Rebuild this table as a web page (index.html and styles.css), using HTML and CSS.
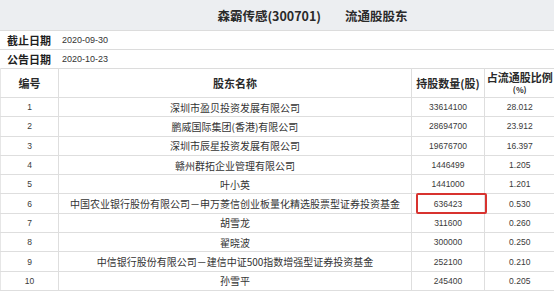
FILE: index.html
```html
<!DOCTYPE html>
<html lang="zh-CN">
<head>
<meta charset="utf-8">
<title>森霸传感(300701) 流通股股东</title>
<link rel="stylesheet" href="styles.css">
</head>
<body>
<div class="page">
  <div class="title">
    <span class="title-stock">森霸传感(300701)</span>
    <span class="title-kind">流通股股东</span>
  </div>
  <div class="info-row">
    <span class="info-label">截止日期</span>
    <span class="info-value">2020-09-30</span>
  </div>
  <div class="info-row">
    <span class="info-label">公告日期</span>
    <span class="info-value">2020-10-23</span>
  </div>
  <table class="holders">
    <colgroup>
      <col class="c-no">
      <col class="c-name">
      <col class="c-qty">
      <col class="c-pct">
    </colgroup>
    <thead>
      <tr>
        <th>编号</th>
        <th>股东名称</th>
        <th>持股数量(股)</th>
        <th class="th-pct">占流通股比例<br><span class="pct-unit">(%)</span></th>
      </tr>
    </thead>
    <tbody>
      <tr><td class="num">1</td><td class="name">深圳市盈贝投资发展有限公司</td><td class="num">33614100</td><td class="num">28.012</td></tr>
      <tr><td class="num">2</td><td class="name">鹏威国际集团(香港)有限公司</td><td class="num">28694700</td><td class="num">23.912</td></tr>
      <tr><td class="num">3</td><td class="name">深圳市辰星投资发展有限公司</td><td class="num">19676700</td><td class="num">16.397</td></tr>
      <tr><td class="num">4</td><td class="name">赣州群拓企业管理有限公司</td><td class="num">1446499</td><td class="num">1.205</td></tr>
      <tr><td class="num">5</td><td class="name">叶小英</td><td class="num">1441000</td><td class="num">1.201</td></tr>
      <tr><td class="num">6</td><td class="name">中国农业银行股份有限公司－申万菱信创业板量化精选股票型证券投资基金</td><td class="num highlight">636423</td><td class="num">0.530</td></tr>
      <tr><td class="num">7</td><td class="name">胡雪龙</td><td class="num">311600</td><td class="num">0.260</td></tr>
      <tr><td class="num">8</td><td class="name">翟晓波</td><td class="num">300000</td><td class="num">0.250</td></tr>
      <tr><td class="num">9</td><td class="name">中信银行股份有限公司－建信中证500指数增强型证券投资基金</td><td class="num">252100</td><td class="num">0.210</td></tr>
      <tr><td class="num">10</td><td class="name">孙雪平</td><td class="num">245400</td><td class="num">0.205</td></tr>
    </tbody>
  </table>
</div>
</body>
</html>
```

FILE: styles.css
```css
html, body {
  margin: 0;
  padding: 0;
  background: #ffffff;
}

body {
  font-family: "Noto Sans CJK SC", "Noto Sans", sans-serif;
  color: #2b2b2b;
}

.page {
  width: 554px;
  overflow: hidden;
}

.title {
  height: 30px;
  background: #eceef1;
  display: flex;
  align-items: center;
  justify-content: center;
  padding-left: 71px;
  box-sizing: border-box;
  font-size: 12.5px;
  font-weight: bold;
  color: #2a2a2a;
}

.title-kind {
  margin-left: 24px;
}

.info-row {
  height: 19px;
  box-sizing: border-box;
  border-top: 1px solid #dcdcdc;
  display: flex;
  align-items: center;
}

.info-label {
  width: 58px;
  padding-left: 7px;
  box-sizing: border-box;
  font-size: 11px;
  font-weight: bold;
  color: #1e1e1e;
}

.info-value {
  padding-left: 4px;
  font-family: "Liberation Sans", sans-serif;
  font-size: 9px;
  color: #333;
}

.holders {
  width: 554px;
  table-layout: fixed;
  border-collapse: collapse;
  border-top: 1px solid #dcdcdc;
}

.c-no { width: 58px; }
.c-name { width: 353px; }
.c-qty { width: 73px; }
.c-pct { width: 70px; }

.holders th,
.holders td {
  padding: 0;
  text-align: center;
  border-bottom: 1px solid #dedede;
  border-right: 1px solid #dedede;
  white-space: nowrap;
  overflow: visible;
}

.holders th:last-child,
.holders td:last-child {
  border-right: none;
}

.holders th:first-child,
.holders td:first-child {
  border-left: 1px solid #e6e6e6;
}

.holders th {
  height: 28px;
  font-size: 11px;
  font-weight: bold;
  color: #2a2a2a;
}

.th-pct {
  line-height: 11px;
}

.pct-unit {
  font-size: 8px;
}

.holders td {
  height: 18.3px;
}

.name {
  font-size: 10px;
  color: #333;
}

.num {
  font-family: "Liberation Sans", sans-serif;
  font-size: 8.5px;
  color: #3a3a3a;
}

.highlight {
  position: relative;
}

.highlight::after {
  content: "";
  position: absolute;
  left: 4px;
  right: -3px;
  top: -1px;
  bottom: -1px;
  border: 2px solid #d8332f;
  border-radius: 2px;
}
```
